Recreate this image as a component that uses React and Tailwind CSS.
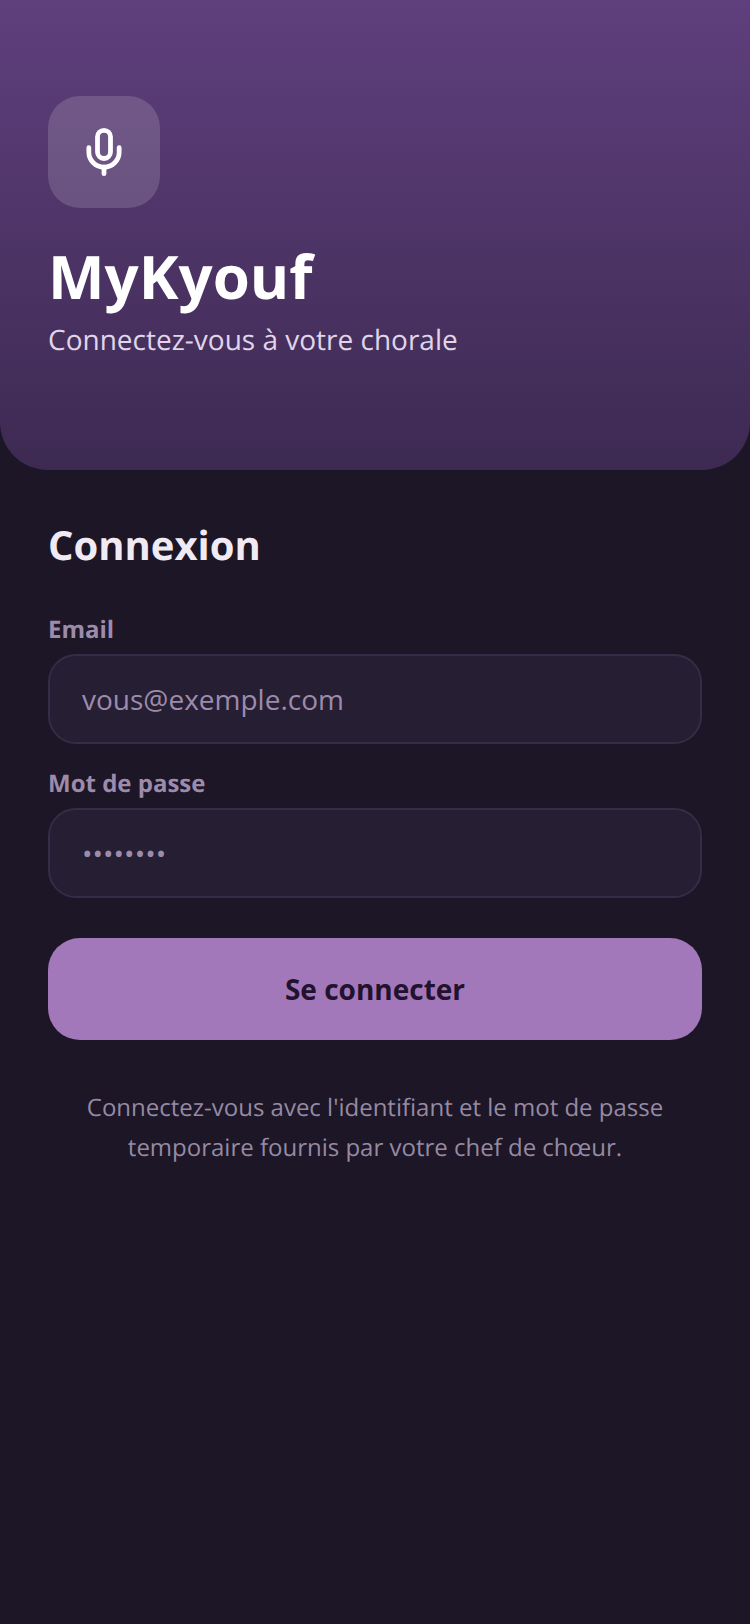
import { Mic } from 'lucide-react';

export default function App() {
  return (
    <div className="min-h-[1624px] bg-[#1c1626] font-['Open_Sans',sans-serif] antialiased [text-rendering:geometricPrecision]">
      {/* Header */}
      <div className="h-[470px] rounded-b-[48px] bg-gradient-to-b from-[#5f3f7d] to-[#3d2a52] px-12 pt-24">
        <div className="flex h-28 w-28 items-center justify-center rounded-[32px] bg-white/15">
          <Mic className="h-[52px] w-[52px] text-white" strokeWidth={2.2} />
        </div>
        <h1 className="mt-8 text-[60px] leading-[72px] font-bold text-white">MyKyouf</h1>
        <p className="mt-2 text-[28px] leading-[40px] text-[#e0d5ea]">Connectez-vous à votre chorale</p>
      </div>

      {/* Formulaire */}
      <div className="px-12 pt-[47px]">
        <h2 className="text-[40px] leading-[56px] font-bold text-[#f0eaf5]">Connexion</h2>

        <label className="mt-[39px] block text-[24px] leading-[36px] font-bold text-[#9d8bab]">Email</label>
        <input
          type="text"
          placeholder="vous@exemple.com"
          className="mt-[6px] block h-[90px] w-full rounded-[28px] border-2 border-[#352c47] bg-[#261e33] px-8 text-[28px] text-white outline-none placeholder:text-[#9d8bab]"
        />

        <label className="mt-[22px] block text-[24px] leading-[36px] font-bold text-[#9d8bab]">Mot de passe</label>
        <input
          type="text"
          placeholder="••••••••"
          className="mt-[6px] block h-[90px] w-full rounded-[28px] border-2 border-[#352c47] bg-[#261e33] px-8 text-[28px] text-white outline-none placeholder:text-[#9d8bab]"
        />

        <button className="mt-10 block h-[102px] w-full rounded-[32px] bg-[#a378ba] text-[28px] font-bold text-[#22122e]">
          Se connecter
        </button>

        <p className="mt-12 text-center text-[24px] leading-[40px] text-[#968aa3]">
          Connectez-vous avec l'identifiant et le mot de passe
          <br />
          temporaire fournis par votre chef de chœur.
        </p>
      </div>
    </div>
  );
}
